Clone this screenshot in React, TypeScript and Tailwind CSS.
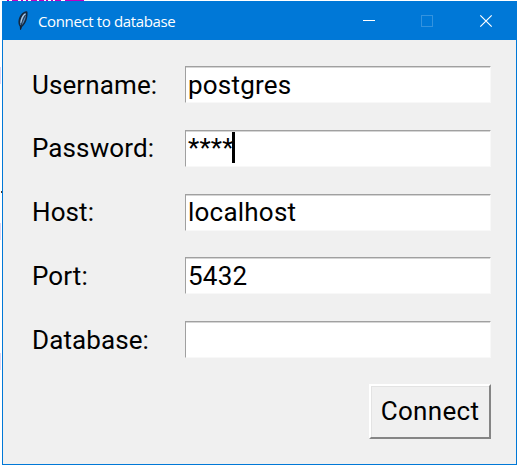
import React from "react";

type Field = { label: string; value: string; gap: string; lift: string; caret?: boolean };

const fields: Field[] = [
  { label: "Username:", value: "postgres", gap: "mt-[26px]", lift: "pb-0" },
  { label: "Password:", value: "****", gap: "mt-[27px]", lift: "pb-[2px]", caret: true },
  { label: "Host:", value: "localhost", gap: "mt-[27px]", lift: "pb-[2px]" },
  { label: "Port:", value: "5432", gap: "mt-[26px]", lift: "pb-0" },
  { label: "Database:", value: "", gap: "mt-[27px]", lift: "pb-0" },
];

function Feather() {
  return (
    <svg className="ml-[14px] h-5 w-3 shrink-0" viewBox="0 0 12 20">
      <path d="M3 18.5 L2.8 15.5 C0 12 1.5 4 7 1 C8.5 0 10.5 0 10.5 1.2 C10.8 6 9.5 12 5 16 L3.8 19 Z" fill="#14283f" />
      <path d="M3.2 14 C2.8 9 4.5 4.5 9 1.8 C9.4 6 8 11 4.6 14.5 Z" fill="#5685b4" />
      <path d="M4 12 C4.2 8 5.5 5 8 3" stroke="#b3cce5" strokeWidth="1.2" fill="none" />
      <path d="M3.5 18.5 C4 13 6 8 8.5 4" stroke="#101c2c" strokeWidth="0.8" fill="none" />
    </svg>
  );
}

function TitleBar() {
  return (
    <header className="flex h-[38px] items-center bg-[#0078d7] text-white">
      <Feather />
      <span className="ml-[9px] flex-1 whitespace-nowrap font-['Open_Sans','Noto_Sans',sans-serif] text-[15px] leading-5 tracking-[-0.37px]">
        Connect to database
      </span>
      <svg className="h-[38px] w-[160px] shrink-0" viewBox="0 0 160 38" fill="none">
        <path d="M7 18.5h12" stroke="#fff" />
        <rect x="65.5" y="13.5" width="11" height="11" stroke="#3393df" />
        <path d="M124.3 13.3l11.4 11.4M135.7 13.3l-11.4 11.4" stroke="#fff" strokeWidth="1.2" />
      </svg>
    </header>
  );
}

function Entry({ value, caret, lift }: { value: string; caret?: boolean; lift: string }) {
  return (
    <div className={`flex h-[37px] w-[306px] items-center border border-t-[#a0a0a0] border-l-[#a0a0a0] border-r-[#f8f8f8] border-b-[#f8f8f8] bg-white pl-[2px] shadow-[inset_0_1px_0_#d5d5d5] ${lift}`}>
      <span className="leading-[30px] tracking-[0.22px]">{value}</span>
      {caret && <span className="-ml-[2px] h-[31px] w-[3px] bg-black" />}
    </div>
  );
}

function BackgroundEdge() {
  return (
    <div className="flex w-[2px] shrink-0 flex-col items-start">
      <div className="mt-[66px] h-[17px] w-px bg-[#e0d6f2]" />
      <div className="mt-[107px] h-[2px] w-px self-end bg-[#4a3828]" />
      <div className="mt-[30px] h-[17px] w-px bg-[#e0d6f2]" />
      <div className="mt-[113px] h-[17px] w-px bg-[#e0d6f2]" />
    </div>
  );
}

export default function App() {
  return (
    <div className="flex h-[466px] w-[519px] flex-col overflow-hidden bg-white font-['Roboto',sans-serif]">
      <svg className="h-px w-[90px] shrink-0" viewBox="0 0 90 1" shapeRendering="crispEdges">
        <path d="M7 .5h2M12 .5h6M21 .5h2M26 .5h2M31 .5h6M39 .5h5M46 .5h2M51 .5h2M55 .5h6M65 .5h19" stroke="#c000c0" />
      </svg>
      <div className="flex">
        <BackgroundEdge />
        <main className="h-[464px] w-[515px] border border-[#0078d7] bg-[#f0f0f0] text-[26px] text-black">
          <TitleBar />
          {fields.map((f) => (
            <div key={f.label} className={`flex items-center ${f.gap}`}>
              <span className={`w-[182px] pl-[29px] leading-[30px] tracking-[0.1px] ${f.lift}`}>{f.label}</span>
              <Entry value={f.value} caret={f.caret} lift={f.lift} />
            </div>
          ))}
          <button className="mt-[26px] ml-[366px] flex h-[55px] w-[122px] items-center justify-center border-2 border-t-white border-l-white border-r-[#858585] border-b-[#858585] tracking-[0.3px] shadow-[inset_1px_1px_0_#e3e3e3]">
            Connect
          </button>
        </main>
      </div>
    </div>
  );
}
